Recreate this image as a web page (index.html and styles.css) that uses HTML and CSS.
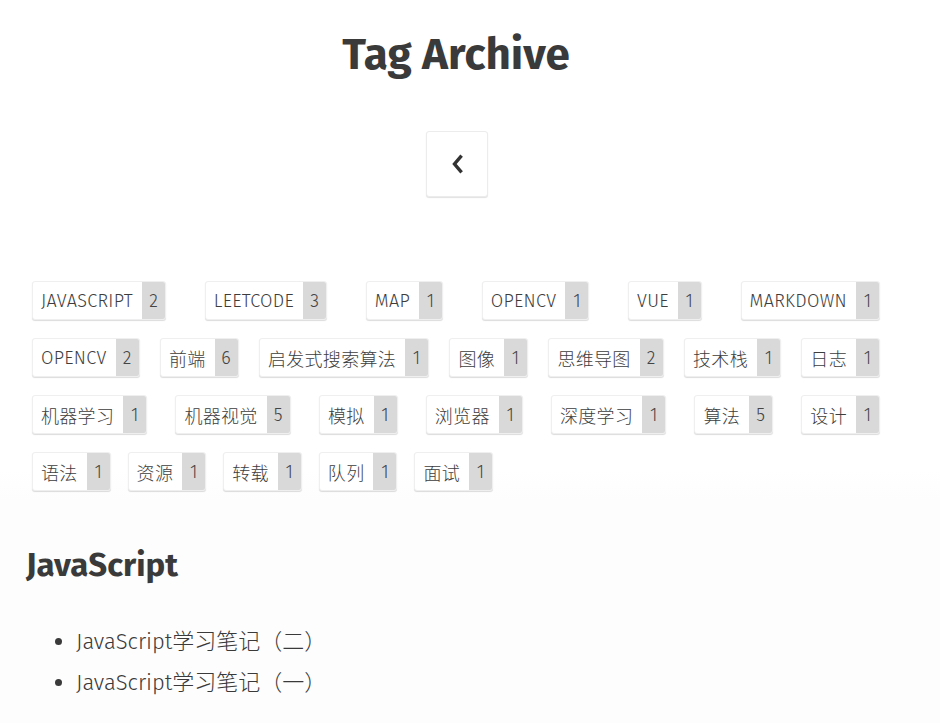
FILE: index.html
```html
<!DOCTYPE html>
<html lang="zh-CN">
<head>
<meta charset="utf-8">
<title>Tag Archive</title>
<link rel="stylesheet" href="styles.css">
</head>
<body>
<main class="page">
  <h1 class="title">Tag Archive</h1>
  <div class="back-wrap">
    <a class="back-btn" href="#" aria-label="back">
      <svg width="12" height="20" viewBox="0 0 12 20"><path d="M9.5 3 L3.5 10 L9.5 17" fill="none" stroke="#333" stroke-width="3.4" stroke-linecap="square" stroke-linejoin="miter"/></svg>
    </a>
  </div>
  <div class="tags">
    <div class="tag-row">
      <a class="tag"><span class="tag-name">JAVASCRIPT</span><span class="tag-count">2</span></a>
      <a class="tag"><span class="tag-name">LEETCODE</span><span class="tag-count">3</span></a>
      <a class="tag"><span class="tag-name">MAP</span><span class="tag-count">1</span></a>
      <a class="tag"><span class="tag-name">OPENCV</span><span class="tag-count">1</span></a>
      <a class="tag"><span class="tag-name">VUE</span><span class="tag-count">1</span></a>
      <a class="tag"><span class="tag-name">MARKDOWN</span><span class="tag-count">1</span></a>
    </div>
    <div class="tag-row">
      <a class="tag"><span class="tag-name">OPENCV</span><span class="tag-count">2</span></a>
      <a class="tag"><span class="tag-name">前端</span><span class="tag-count">6</span></a>
      <a class="tag"><span class="tag-name">启发式搜索算法</span><span class="tag-count">1</span></a>
      <a class="tag"><span class="tag-name">图像</span><span class="tag-count">1</span></a>
      <a class="tag"><span class="tag-name">思维导图</span><span class="tag-count">2</span></a>
      <a class="tag"><span class="tag-name">技术栈</span><span class="tag-count">1</span></a>
      <a class="tag"><span class="tag-name">日志</span><span class="tag-count">1</span></a>
    </div>
    <div class="tag-row">
      <a class="tag"><span class="tag-name">机器学习</span><span class="tag-count">1</span></a>
      <a class="tag"><span class="tag-name">机器视觉</span><span class="tag-count">5</span></a>
      <a class="tag"><span class="tag-name">模拟</span><span class="tag-count">1</span></a>
      <a class="tag"><span class="tag-name">浏览器</span><span class="tag-count">1</span></a>
      <a class="tag"><span class="tag-name">深度学习</span><span class="tag-count">1</span></a>
      <a class="tag"><span class="tag-name">算法</span><span class="tag-count">5</span></a>
      <a class="tag"><span class="tag-name">设计</span><span class="tag-count">1</span></a>
    </div>
    <div class="tag-row last">
      <a class="tag"><span class="tag-name">语法</span><span class="tag-count">1</span></a>
      <a class="tag"><span class="tag-name">资源</span><span class="tag-count">1</span></a>
      <a class="tag"><span class="tag-name">转载</span><span class="tag-count">1</span></a>
      <a class="tag"><span class="tag-name">队列</span><span class="tag-count">1</span></a>
      <a class="tag"><span class="tag-name">面试</span><span class="tag-count">1</span></a>
    </div>
  </div>
  <section class="tag-section">
    <h2 class="section-title">JavaScript</h2>
    <ul class="post-list">
      <li><a href="#">JavaScript学习笔记（二）</a></li>
      <li><a href="#">JavaScript学习笔记（一）</a></li>
    </ul>
  </section>
</main>
</body>
</html>
```

FILE: styles.css
```css
html, body {
  margin: 0;
  padding: 0;
}

body {
  font-family: "Fira Sans", "Noto Sans CJK SC", sans-serif;
  color: #3a3a3a;
  background: linear-gradient(to bottom, #ffffff 0, #ffffff 470px, #fdfdfd 500px, #fdfdfd 100%);
  min-height: 723px;
}

.page {
  display: flex;
  flex-direction: column;
  width: 912px;
}

.title {
  margin: 27px 0 0;
  text-align: center;
  font-size: 44px;
  line-height: 56px;
  font-weight: 700;
  color: #3a3a3a;
}

.back-wrap {
  display: flex;
  justify-content: center;
  margin-top: 48px;
}

.back-btn {
  width: 60px;
  height: 64px;
  display: flex;
  align-items: center;
  justify-content: center;
  background: #fff;
  border: 1px solid #ececec;
  border-radius: 3px;
  box-shadow: 0 1px 1px rgba(0, 0, 0, 0.12);
  margin-left: 1px;
}

.tags {
  display: flex;
  flex-direction: column;
  gap: 18px;
  width: 848px;
  margin: 84px 0 0 32px;
}

.tag-row {
  display: flex;
  justify-content: space-between;
}

.tag-row.last {
  justify-content: flex-start;
  gap: 17px;
}

.tag {
  display: flex;
  height: 39px;
  background: #fff;
  border: 1px solid #efefef;
  border-radius: 3px;
  box-shadow: 0 1px 1px rgba(0, 0, 0, 0.14);
  overflow: hidden;
  box-sizing: border-box;
  font-size: 18px;
  color: #3d3d3d;
}

.tag-name {
  display: flex;
  align-items: center;
  padding: 0 9px 0 8px;
  font-weight: 300;
  letter-spacing: 0.3px;
}

.tag-count {
  display: flex;
  align-items: center;
  justify-content: center;
  width: 23px;
  background: #d9d9d9;
  color: #444;
  font-weight: 300;
}

.tag-section {
  margin: 54px 0 0 26px;
}

.section-title {
  margin: 0;
  font-size: 33px;
  line-height: 40px;
  font-weight: 700;
  color: #3a3a3a;
}

.post-list {
  margin: 36px 0 0;
  padding-left: 50px;
  font-size: 22px;
  line-height: 41px;
  font-weight: 300;
}

.post-list li::marker {
  color: #3a3a3a;
}

.post-list a {
  color: #3a3a3a;
  text-decoration: none;
}
```
